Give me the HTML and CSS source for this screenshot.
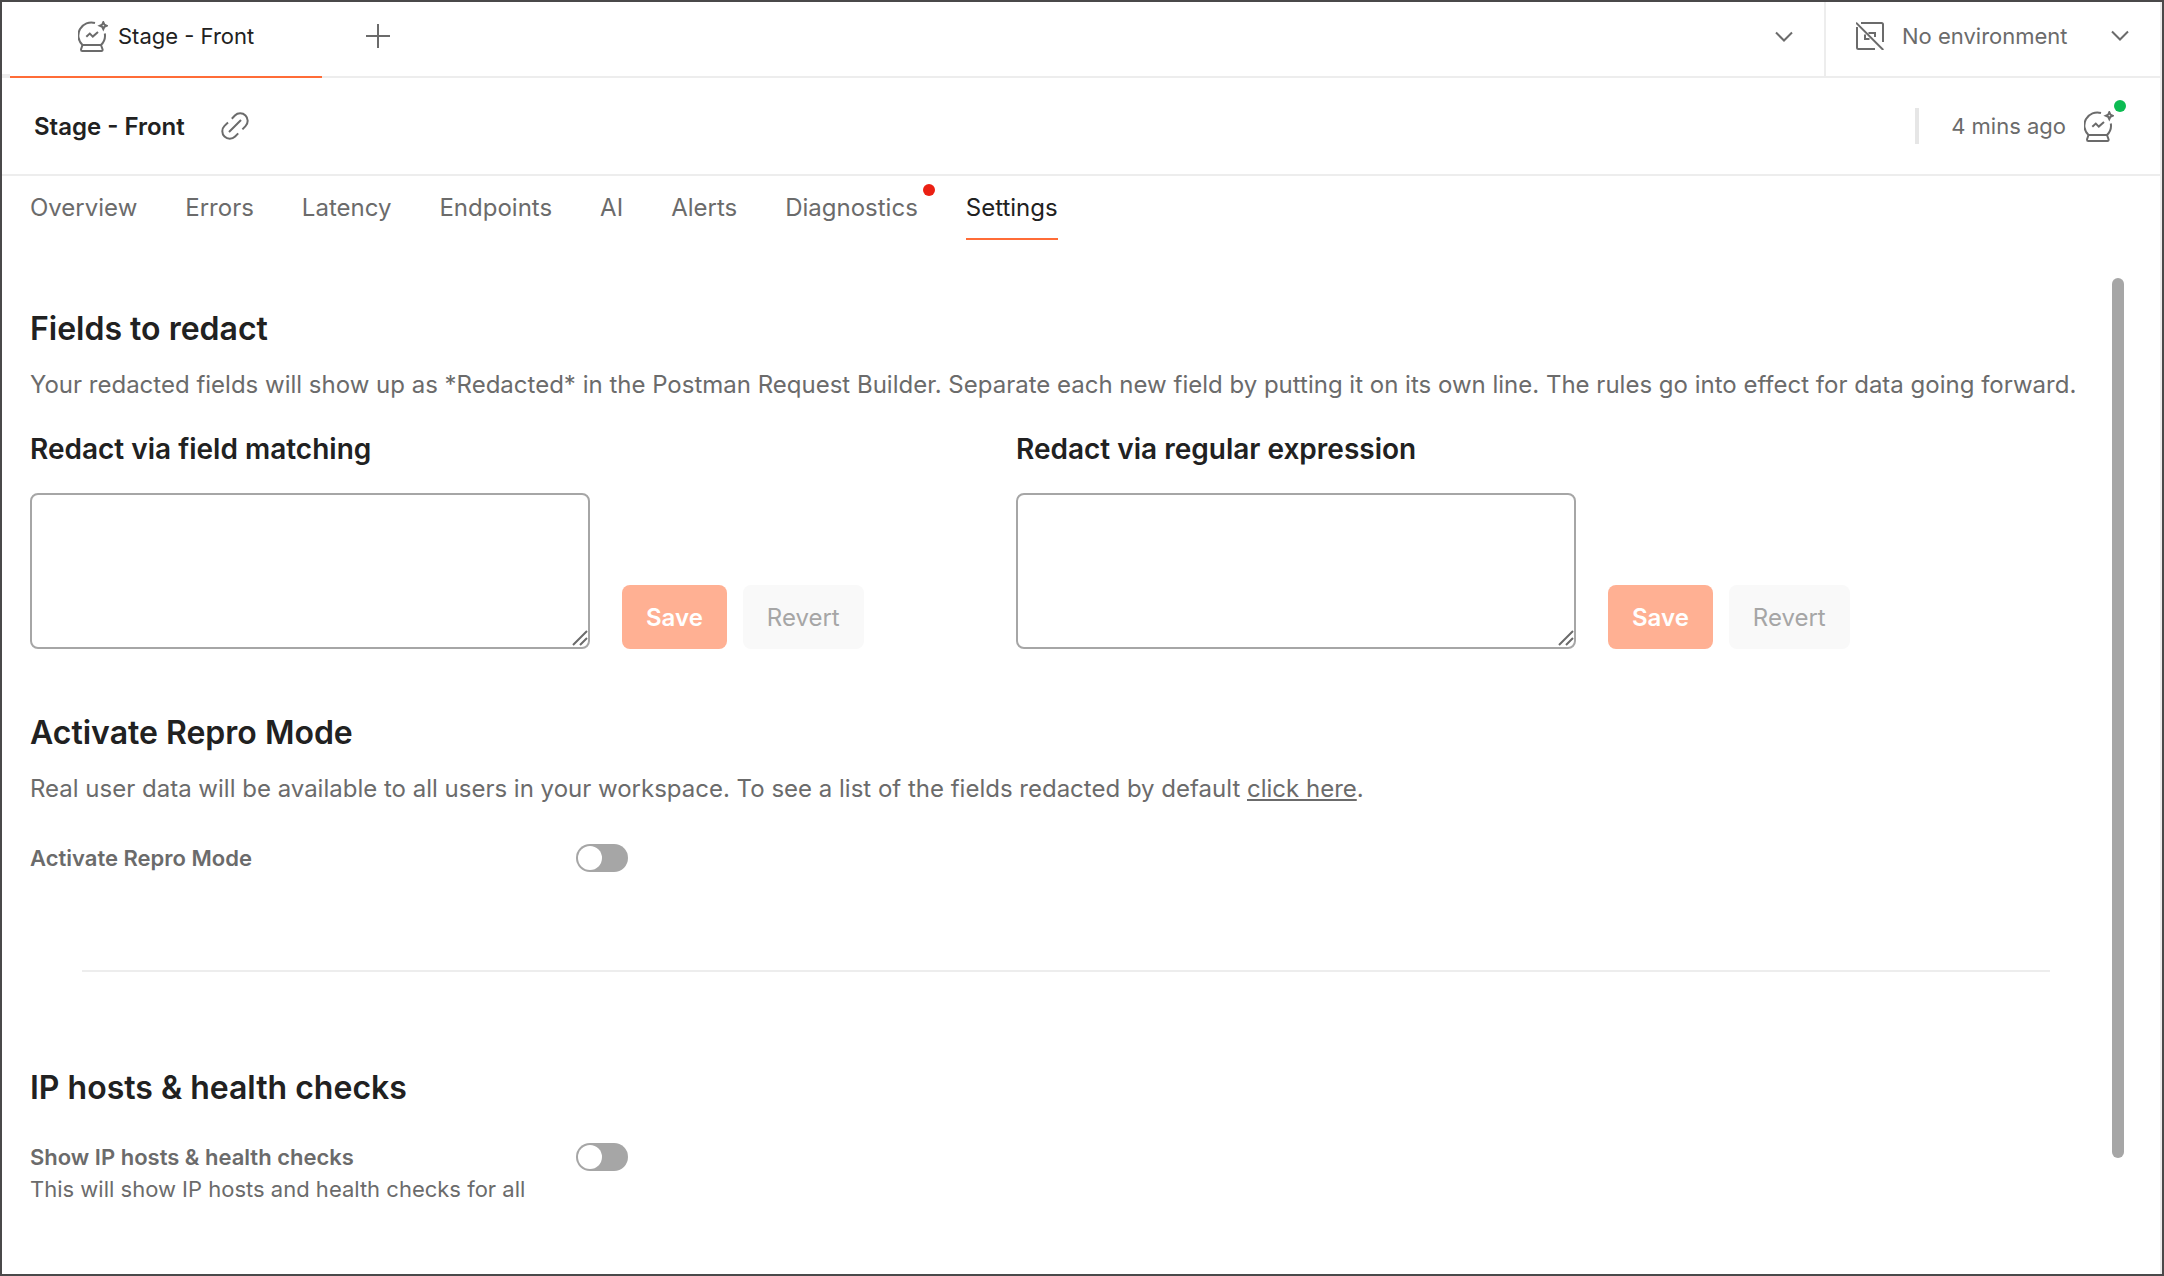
FILE: index.html
```html
<!DOCTYPE html>
<html lang="en">
<head>
  <meta charset="UTF-8" />
  <meta name="viewport" content="width=device-width, initial-scale=1" />
  <title>Stage - Front</title>
  <link rel="stylesheet" href="styles.css">
</head>
<body>

  <svg class="sprite" aria-hidden="true">
    <symbol id="insights" viewBox="0 0 30 31">
      <path d="M17 2A13 13 0 0 0 4.5 24H23A13 13 0 0 0 26.8 12.5" />
      <path d="M4.5 24 3 28.5Q3 30 4.3 30H23.4Q24.8 30 24.6 28.5L23 24" />
      <path d="M8.3 15.8 11.8 12.6 14.8 15.6 20 11" />
      <path d="M25.3 1.2 26.4 3.6 28.8 4.7 26.4 5.8 25.3 8.2 24.2 5.8 21.8 4.7 24.2 3.6Z" />
    </symbol>
    <symbol id="chevron" viewBox="0 0 18 12">
      <path d="M1 1.5 9 9.5 17 1.5" />
    </symbol>
    <symbol id="grip" viewBox="0 0 16 16">
      <path d="M1 15 15 1M8 15 15 8" />
    </symbol>
  </svg>

  <div class="topbar">
    <a href="#" class="file-tab">
      <svg class="icon icon-insights"><use href="#insights" /></svg>
      Stage - Front
    </a>
    <button class="icon-btn new-tab" aria-label="New tab">
      <svg class="icon" width="24" height="24" viewBox="0 0 24 24"><path d="M12 0V24M0 12H24" /></svg>
    </button>
    <button class="icon-btn tab-list" aria-label="All tabs">
      <svg class="icon icon-chevron"><use href="#chevron" /></svg>
    </button>
    <div class="env">
      <svg class="icon" width="28" height="28" viewBox="0 0 28 28">
        <path d="M5 1H25.5Q27 1 27 2.5V20M1 5V25.5Q1 27 2.5 27H19M0 .7 27.3 28" />
        <path d="M12.5 11H19V15M9 12.5V17H13.5" />
      </svg>
      <select aria-label="Environment">
        <option>No environment</option>
      </select>
      <svg class="icon icon-chevron"><use href="#chevron" /></svg>
    </div>
  </div>

  <header>
    <h1 class="page-title">Stage - Front</h1>
    <button class="icon-btn" aria-label="Copy link">
      <svg class="icon" width="28" height="28" viewBox="0 0 28 28">
        <path d="M10.8 6.8 13.9 3.5A7.4 7.4 0 0 1 24.5 14.1L21.4 17.4" />
        <path d="M7 10.5 3.5 13.9A7.4 7.4 0 0 0 14.1 24.5L17.2 21.4M8 20 20 8" />
      </svg>
    </button>
    <div class="status">
      <span>4 mins ago</span>
      <div class="status-icon">
        <svg class="icon icon-insights"><use href="#insights" /></svg>
        <span class="dot dot-green"></span>
      </div>
    </div>
  </header>

  <nav>
    <a href="#">Overview</a>
    <a href="#">Errors</a>
    <a href="#">Latency</a>
    <a href="#">Endpoints</a>
    <a href="#">AI</a>
    <a href="#">Alerts</a>
    <a href="#">Diagnostics<span class="dot dot-red"></span></a>
    <a href="#" class="active">Settings</a>
  </nav>

  <div class="pane">
    <main>
      <section>
        <h2>Fields to redact</h2>
        <p>Your redacted fields will show up as *Redacted* in the Postman Request Builder. Separate each new field by putting it on its own line. The rules go into effect for data going forward.</p>
        <div class="redact-grid">
          <form>
            <label class="field-label" for="fieldMatch">Redact via field matching</label>
            <div class="field-row">
              <div class="field-box">
                <textarea id="fieldMatch"></textarea>
                <svg class="grip"><use href="#grip" /></svg>
              </div>
              <div class="actions">
                <button class="btn save-btn" disabled>Save</button>
                <button class="btn revert-btn" disabled>Revert</button>
              </div>
            </div>
          </form>
          <form>
            <label class="field-label" for="regexMatch">Redact via regular expression</label>
            <div class="field-row">
              <div class="field-box">
                <textarea id="regexMatch"></textarea>
                <svg class="grip"><use href="#grip" /></svg>
              </div>
              <div class="actions">
                <button class="btn save-btn" disabled>Save</button>
                <button class="btn revert-btn" disabled>Revert</button>
              </div>
            </div>
          </form>
        </div>
      </section>

      <section class="repro">
        <h2>Activate Repro Mode</h2>
        <p>Real user data will be available to all users in your workspace. To see a list of the fields redacted by default <a href="#">click here</a>.</p>
        <div class="toggle-row">
          <label for="reproMode">Activate Repro Mode</label>
          <input type="checkbox" class="toggle" id="reproMode" />
        </div>
      </section>

      <hr />

      <section>
        <h2>IP hosts &amp; health checks</h2>
        <div class="toggle-row">
          <div>
            <label for="ipHosts">Show IP hosts &amp; health checks</label>
            <div class="hint">This will show IP hosts and health checks for all</div>
          </div>
          <input type="checkbox" class="toggle" id="ipHosts" />
        </div>
      </section>
    </main>
    <div class="scrollbar"></div>
  </div>

</body>
</html>
```

FILE: styles.css
```css
* {
  box-sizing: border-box;
}

body {
  margin: 0;
  min-height: 100vh;
  display: flex;
  flex-direction: column;
  border: 2px solid #4a494a;
  background: white;
  box-shadow: inset -2px 0 0 #ededed;
  font-family: Inter, "Liberation Sans", sans-serif;
  font-size: 24px;
  color: #6b6b6b;
}

a {
  color: inherit;
}

h1,
h2,
p {
  margin: 0;
}

/* icons */
.sprite {
  display: none;
}

.icon,
.grip {
  display: block;
  flex-shrink: 0;
  fill: none;
  stroke: #6b6b6b;
  stroke-width: 2;
}

.icon-insights {
  width: 30px;
  height: 31px;
}

.icon-chevron {
  width: 18px;
  height: 12px;
}

.icon-btn {
  background: none;
  border: none;
  padding: 0;
  cursor: pointer;
}

.dot {
  position: absolute;
  width: 12px;
  height: 12px;
  border-radius: 50%;
}

.dot-green {
  top: -11px;
  right: -12px;
  background: #0cbb52;
}

.dot-red {
  top: -8px;
  right: -17px;
  background: #eb2013;
}

/* tab bar */
.topbar {
  display: flex;
  align-items: center;
  height: 76px;
  box-shadow: inset 0 -2px 0 #ededed;
  font-size: 22px;
}

.topbar::before {
  content: "";
  width: 8px;
  height: 4px;
  align-self: flex-end;
  background: #ededed;
}

.file-tab {
  display: flex;
  align-items: center;
  gap: 10px;
  width: 312px;
  height: 76px;
  padding: 0 68px;
  padding-bottom: 6px;
  border-bottom: 2px solid #ff6c37;
  color: #212121;
  text-decoration: none;
  white-space: nowrap;
}

.new-tab {
  margin: 0 44px 8px;
}

.tab-list {
  margin: 0 31px 6px auto;
}

.env {
  display: flex;
  align-items: center;
  width: 338px;
  height: 74px;
  align-self: flex-start;
  padding: 0 33px 6px 30px;
  border-left: 2px solid #ededed;
}

.env select {
  flex: 1;
  min-width: 0;
  appearance: none;
  margin-left: 18px;
  padding: 0;
  border: none;
  background: none;
  font: inherit;
  color: inherit;
}

/* page header */
header {
  display: flex;
  align-items: center;
  gap: 36px;
  height: 98px;
  padding: 0 48px 2px 32px;
  box-shadow: inset 0 -2px 0 #ededed;
}

.page-title {
  font-size: 24px;
  font-weight: 600;
  color: #212121;
}

.status {
  display: flex;
  align-items: center;
  gap: 18px;
  height: 36px;
  margin-left: auto;
  padding-left: 32px;
  border-left: 4px solid #e6e6e6;
  font-size: 22px;
}

.status-icon {
  position: relative;
}

nav {
  display: flex;
  gap: 48px;
  padding: 16px 28px 0;
}

nav a {
  position: relative;
  padding-bottom: 14px;
  border-bottom: 2px solid transparent;
  line-height: 32px;
  text-decoration: none;
}

nav a.active {
  color: #212121;
  border-color: #ff6c37;
}

/* settings */
.pane {
  flex: 1;
  display: flex;
  margin-top: 38px;
  padding: 0 38px 0 28px;
}

main {
  flex: 1;
  min-width: 0;
  margin-right: 10px;
  padding-top: 31px;
}

.scrollbar {
  width: 12px;
  margin-bottom: 116px;
  border-radius: 6px;
  background: #a6a6a6;
}

h2 {
  font-size: 32px;
  font-weight: 600;
  line-height: 40px;
  color: #212121;
}

p {
  margin-top: 16px;
  line-height: 40px;
}

.redact-grid {
  display: grid;
  grid-template-columns: 1fr 1fr;
  margin: 24px 100px 0 0;
}

.field-label {
  display: block;
  margin-bottom: 24px;
  font-size: 28px;
  font-weight: 600;
  line-height: 40px;
  color: #212121;
}

.field-row {
  display: flex;
  align-items: flex-end;
  gap: 32px;
}

.field-box {
  position: relative;
  width: 560px;
}

.field-box textarea {
  display: block;
  width: 100%;
  height: 156px;
  padding: 16px;
  border: 2px solid #a6a6a6;
  border-radius: 8px;
  resize: none;
  font: inherit;
}

.grip {
  position: absolute;
  right: 2px;
  bottom: 3px;
  width: 16px;
  height: 16px;
}

.actions {
  display: flex;
  gap: 16px;
}

.btn {
  height: 64px;
  padding: 0 24px;
  border: none;
  border-radius: 8px;
  font-family: inherit;
  font-size: 24px;
}

.save-btn {
  background: #ffb093;
  color: white;
  font-weight: 600;
}

.revert-btn {
  background: #f9f9f9;
  color: #a6a6a6;
}

.repro {
  margin-top: 64px;
}

.toggle-row {
  display: grid;
  grid-template-columns: 546px auto;
  justify-content: start;
  align-items: start;
  margin-top: 33px;
  font-size: 22px;
  line-height: 32px;
}

.toggle-row label {
  font-weight: 600;
}

.toggle {
  appearance: none;
  width: 52px;
  height: 28px;
  margin: 2px 0;
  padding: 2px;
  border-radius: 14px;
  background: #a6a6a6;
  cursor: pointer;
}

.toggle::before {
  content: "";
  display: block;
  width: 24px;
  height: 24px;
  border-radius: 50%;
  background: white;
}

.toggle:checked {
  background: #0cbb52;
}

.toggle:checked::before {
  margin-left: auto;
}

hr {
  width: 95%;
  height: 2px;
  margin: 96px auto;
  border: none;
  background: #ededed;
}
```
